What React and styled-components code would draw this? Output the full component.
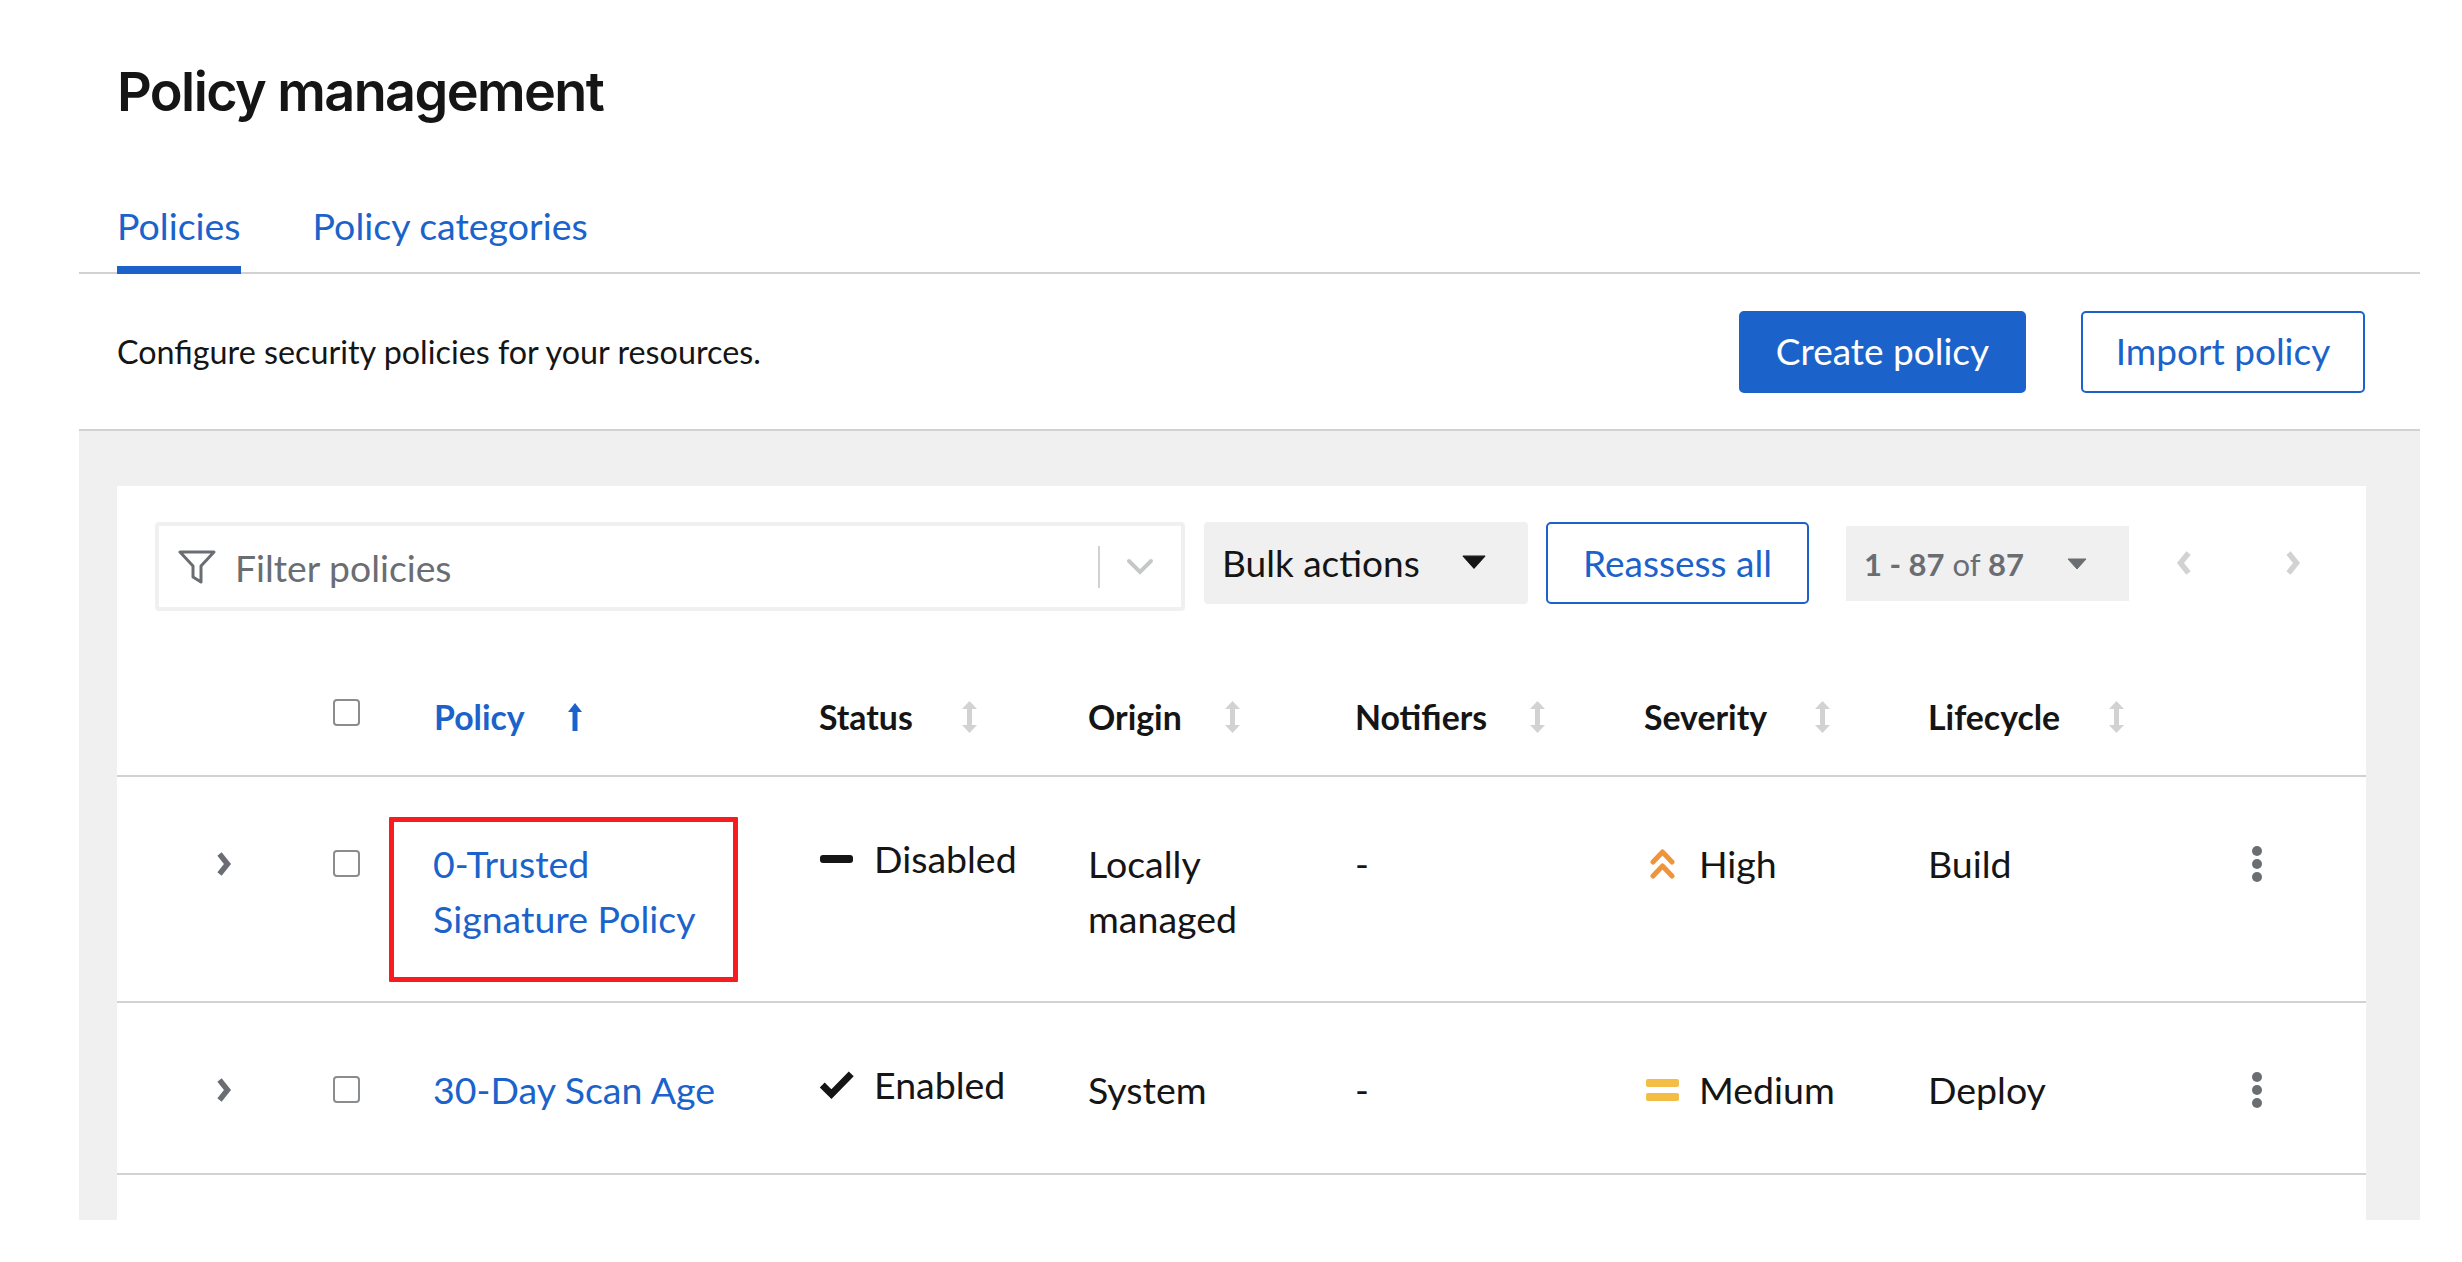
import React from 'react';
import styled, { createGlobalStyle } from 'styled-components';

const GlobalStyle = createGlobalStyle`
    html, body {
        margin: 0;
        padding: 0;
        background: #fff;
        font-family: 'Lato', 'Liberation Sans', sans-serif;
        color: #151515;
    }
`;

const BLUE = '#1b63cb';
const COLUMNS = '216px 101px 385px 269px 267px 289px 284px 312px 126px';

const Page = styled.div`
    width: 2341px;
    height: 1220px;
    margin-left: 79px;
    display: flex;
    flex-direction: column;
`;

const Title = styled.h1`
    margin: 0;
    height: 186px;
    padding: 60px 0 0 38px;
    box-sizing: border-box;
    font-family: 'Inter', sans-serif;
    font-size: 54px;
    font-weight: 600;
    line-height: 64px;
    letter-spacing: -1.6px;
`;

const TabBar = styled.div`
    display: flex;
    gap: 72px;
    height: 88px;
    padding-left: 38px;
    box-sizing: border-box;
    border-bottom: 2px solid #d2d2d2;
`;

const Tab = styled.div`
    height: 88px;
    box-sizing: border-box;
    padding-top: 16px;
    font-size: 37.5px;
    line-height: 48px;
    color: ${BLUE};
    border-bottom: ${props => (props.$active ? `8px solid ${BLUE}` : 'none')};
`;

const DescriptionBar = styled.div`
    display: flex;
    align-items: center;
    justify-content: space-between;
    height: 157px;
    box-sizing: border-box;
    padding: 0 55px 0 38px;
    border-bottom: 2px solid #d2d2d2;
`;

const Description = styled.div`
    font-size: 32.3px;
`;

const ButtonGroup = styled.div`
    display: flex;
    gap: 55px;
`;

const Button = styled.div`
    display: flex;
    align-items: center;
    justify-content: center;
    box-sizing: border-box;
    width: ${props => props.$width}px;
    height: ${props => props.$height}px;
    padding-bottom: 2px;
    border-radius: 5px;
    border: 2px solid ${BLUE};
    background: ${props => (props.$primary ? BLUE : '#fff')};
    color: ${props => (props.$primary ? '#fff' : BLUE)};
    font-size: 37px;
`;

const GrayArea = styled.div`
    flex: 1;
    display: flex;
    background: #f0f0f0;
    padding: 55px 54px 0 38px;
    min-height: 0;
`;

const Panel = styled.div`
    flex: 1;
    background: #fff;
`;

const Toolbar = styled.div`
    display: flex;
    align-items: flex-start;
    height: 154px;
    box-sizing: border-box;
    padding: 36px 0 0 38px;
`;

const FilterBox = styled.div`
    display: flex;
    align-items: center;
    width: 1030px;
    height: 89px;
    box-sizing: border-box;
    border: 4px solid #f0f0f0;
    border-radius: 4px;
    padding-left: 19px;
    margin-right: 19px;
`;

const FilterText = styled.div`
    flex: 1;
    margin-left: 19px;
    padding-top: 2px;
    font-size: 37.3px;
    color: #6a6e73;
`;

const FilterDivider = styled.div`
    width: 2px;
    height: 42px;
    background: #d2d2d2;
    margin-right: 26px;
`;

const FilterCaret = styled.svg`
    width: 28px;
    height: 18px;
    margin-right: 27px;
`;

const BulkActions = styled.div`
    display: flex;
    align-items: center;
    justify-content: space-between;
    width: 324px;
    height: 82px;
    box-sizing: border-box;
    padding: 0 42px 2px 18px;
    border-radius: 4px;
    background: #f0f0f0;
    font-size: 37px;
    margin-right: 18px;
`;

const Pagination = styled.div`
    display: flex;
    align-items: center;
    justify-content: space-between;
    width: 283px;
    height: 75px;
    box-sizing: border-box;
    padding: 0 42px 0 18px;
    margin: 4px 0 0 37px;
    background: #f0f0f0;
    color: #6a6e73;
    font-size: 31px;

    b {
        font-weight: 700;
    }
`;

const PageArrows = styled.div`
    display: flex;
    align-items: center;
    gap: 93px;
    height: 82px;
    margin-left: 47px;
`;

const TableRow = styled.div`
    display: grid;
    grid-template-columns: ${COLUMNS};
    align-items: start;
    box-sizing: border-box;
    height: ${props => props.$height}px;
    padding-top: ${props => props.$top}px;
    border-bottom: 2px solid #d2d2d2;
    position: relative;
`;

const HeaderCell = styled.div`
    display: flex;
    align-items: center;
    height: 48px;
    font-size: 33.8px;
    font-weight: 700;
    color: ${props => (props.$active ? BLUE : '#151515')};
`;

const SortGap = styled.span`
    display: flex;
    margin-left: ${props => props.$gap}px;
`;

const Check = styled.div`
    width: 27px;
    height: 27px;
    box-sizing: border-box;
    border: 2px solid #8a8d90;
    border-radius: 4px;
    margin-top: ${props => props.$top}px;
`;

const Expander = styled.div`
    display: flex;
    justify-content: flex-start;
    padding: 15px 0 0 99px;
`;

const Cell = styled.div`
    font-size: 37.5px;
    line-height: 55px;
`;

const LinkCell = styled(Cell)`
    color: ${BLUE};
    width: 300px;
    margin-left: -1px;
`;

const StatusCell = styled(Cell)`
    display: flex;
    align-items: center;
    gap: 20px;
    margin-top: -5px;
`;

const StatusIconSlot = styled.span`
    display: flex;
    justify-content: center;
    width: 35px;
`;

const SeverityCell = styled(Cell)`
    display: flex;
    align-items: center;
    gap: 19px;
`;

const SeverityIconSlot = styled.span`
    display: flex;
    justify-content: center;
    width: 36px;
`;

const Kebab = styled.div`
    display: flex;
    flex-direction: column;
    gap: 3px;
    padding: 10px 0 0 12px;
`;

const KebabDot = styled.i`
    display: block;
    width: 10px;
    height: 10px;
    border-radius: 50%;
    background: #6a6e73;
`;

const Highlight = styled.div`
    position: absolute;
    left: 272px;
    top: 40px;
    width: 349px;
    height: 165px;
    box-sizing: border-box;
    border: 5px solid #f81c1f;
    border-radius: 1px;
    pointer-events: none;
`;

const FilterIcon = () => (
    <svg width="38" height="34" viewBox="0 0 38 34" fill="none">
        <path d="M2 2 H36 L23 16 V32 L15 27 V16 Z" stroke="#6a6e73" strokeWidth="3" strokeLinejoin="round" />
    </svg>
);

const Caret = ({ color = '#151515', width = 24 }) => (
    <svg width={width} height={width * 0.6} viewBox="0 0 20 12">
        <path d="M1 1 H19 L10 11 Z" fill={color} stroke={color} strokeLinejoin="round" />
    </svg>
);

const Chevron = ({ dir = 'right', color = '#6a6e73' }) => (
    <svg width="16" height="26" viewBox="0 0 16 26" fill="none">
        <path
            d={dir === 'right' ? 'M3.5 3 L11.5 13 L3.5 23' : 'M12.5 3 L4.5 13 L12.5 23'}
            stroke={color}
            strokeWidth="5.5"
            strokeLinejoin="miter"
        />
    </svg>
);

const SortBoth = () => (
    <svg width="15" height="32" viewBox="0 0 15 32">
        <path d="M7.5 0 L15 8 H10 V24 H15 L7.5 32 L0 24 H5 V8 H0 Z" fill="#d2d2d2" />
    </svg>
);

const SortUp = () => (
    <svg width="14" height="29" viewBox="0 0 14 29">
        <path d="M7 0 L14 9 H9.5 V28 H4.5 V9 H0 Z" fill={BLUE} />
    </svg>
);

const DisabledIcon = () => (
    <svg width="33" height="8" viewBox="0 0 33 8">
        <rect width="33" height="8" rx="3" fill="#151515" />
    </svg>
);

const EnabledIcon = () => (
    <svg width="38" height="31" viewBox="0 0 38 31" fill="none">
        <path d="M3.5 16 L13.5 26 L35 4" stroke="#151515" strokeWidth="7.5" strokeLinejoin="miter" />
    </svg>
);

const HighIcon = () => (
    <svg width="25" height="30" viewBox="0 0 25 30" fill="none">
        <path d="M3 13 L12.5 3 L22 13 M3 27 L12.5 17 L22 27" stroke="#f0943a" strokeWidth="5" strokeLinecap="round" strokeLinejoin="round" />
    </svg>
);

const MediumIcon = () => (
    <svg width="33" height="22" viewBox="0 0 33 22">
        <rect width="33" height="8" y="0" rx="2" fill="#f4bd45" />
        <rect width="33" height="8" y="14" rx="2" fill="#f4bd45" />
    </svg>
);

const headers = [
    { label: 'Status', gap: 49 },
    { label: 'Origin', gap: 43 },
    { label: 'Notifiers', gap: 43 },
    { label: 'Severity', gap: 48 },
    { label: 'Lifecycle', gap: 49 },
];

const policies = [
    {
        name: '0-Trusted Signature Policy',
        status: 'Disabled',
        statusIcon: <DisabledIcon />,
        origin: 'Locally managed',
        severity: 'High',
        severityIcon: <HighIcon />,
        lifecycle: 'Build',
        height: 226,
        highlighted: true,
    },
    {
        name: '30-Day Scan Age',
        status: 'Enabled',
        statusIcon: <EnabledIcon />,
        origin: 'System',
        severity: 'Medium',
        severityIcon: <MediumIcon />,
        lifecycle: 'Deploy',
        height: 172,
    },
];

const App = () => (
    <Page>
        <GlobalStyle />
        <Title>Policy management</Title>
        <TabBar>
            <Tab $active>Policies</Tab>
            <Tab>Policy categories</Tab>
        </TabBar>
        <DescriptionBar>
            <Description>Configure security policies for your resources.</Description>
            <ButtonGroup>
                <Button $primary $width={287} $height={82}>Create policy</Button>
                <Button $width={284} $height={82}>Import policy</Button>
            </ButtonGroup>
        </DescriptionBar>
        <GrayArea>
            <Panel>
                <Toolbar>
                    <FilterBox>
                        <FilterIcon />
                        <FilterText>Filter policies</FilterText>
                        <FilterDivider />
                        <FilterCaret viewBox="0 0 28 18" fill="none">
                            <path d="M3 3 L14 14 L25 3" stroke="#c6c7c8" strokeWidth="4" strokeLinecap="round" />
                        </FilterCaret>
                    </FilterBox>
                    <BulkActions>
                        Bulk actions
                        <Caret />
                    </BulkActions>
                    <Button $width={263} $height={82}>Reassess all</Button>
                    <Pagination>
                        <span><b>1 - 87</b> of <b>87</b></span>
                        <Caret color="#6a6e73" width={20} />
                    </Pagination>
                    <PageArrows>
                        <Chevron dir="left" color="#d2d2d2" />
                        <Chevron color="#d2d2d2" />
                    </PageArrows>
                </Toolbar>
                <TableRow $height={137} $top={53}>
                    <span />
                    <Check $top={6} />
                    <HeaderCell $active>
                        Policy
                        <SortGap $gap={43}><SortUp /></SortGap>
                    </HeaderCell>
                    {headers.map(h => (
                        <HeaderCell key={h.label}>
                            {h.label}
                            <SortGap $gap={h.gap}><SortBoth /></SortGap>
                        </HeaderCell>
                    ))}
                </TableRow>
                {policies.map(p => (
                    <TableRow key={p.name} $height={p.height} $top={59}>
                        <Expander><Chevron /></Expander>
                        <Check $top={14} />
                        <LinkCell>{p.name}</LinkCell>
                        <StatusCell>
                            <StatusIconSlot>{p.statusIcon}</StatusIconSlot>
                            {p.status}
                        </StatusCell>
                        <Cell>{p.origin.split(' ').map(w => <div key={w}>{w}</div>)}</Cell>
                        <Cell>-</Cell>
                        <SeverityCell>
                            <SeverityIconSlot>{p.severityIcon}</SeverityIconSlot>
                            {p.severity}
                        </SeverityCell>
                        <Cell>{p.lifecycle}</Cell>
                        <Kebab>
                            <KebabDot />
                            <KebabDot />
                            <KebabDot />
                        </Kebab>
                        {p.highlighted && <Highlight />}
                    </TableRow>
                ))}
            </Panel>
        </GrayArea>
    </Page>
);

export default App;
